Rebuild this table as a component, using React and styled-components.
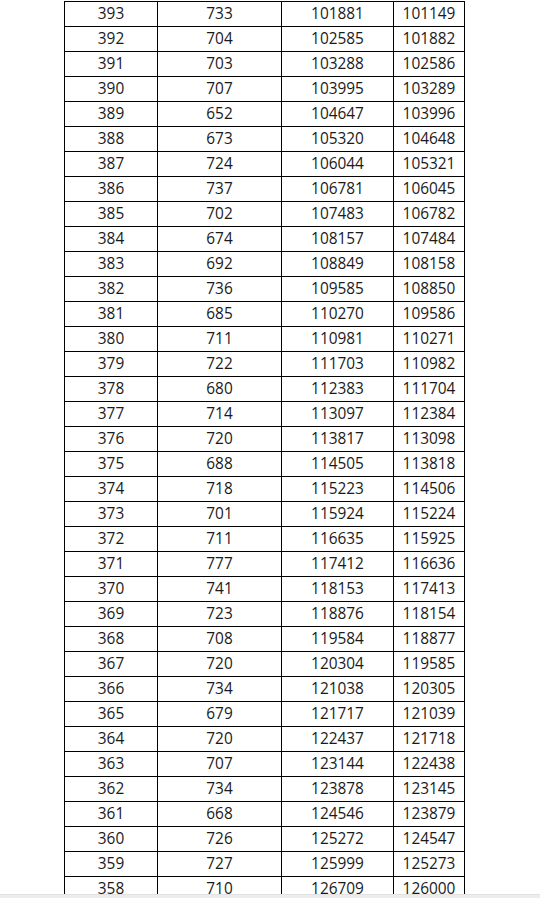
import React from 'react';
import styled, { createGlobalStyle } from 'styled-components';

const GlobalStyle = createGlobalStyle`
  html, body { margin: 0; padding: 0; background: #ffffff; }
  body { font-family: "Open Sans", "Liberation Sans", sans-serif; }
`;

const Page = styled.div`
  width: 540px;
  height: 898px;
  display: flex;
  flex-direction: column;
  overflow: hidden;
  background: #ffffff;
`;

const Viewport = styled.div`
  flex: 1;
  overflow: hidden;
  padding: 1px 0 0 64px;
`;

const Table = styled.table`
  border-collapse: collapse;
  table-layout: fixed;
  width: 400px;
  color: #1a1a1a;
  font-size: 15.4px;
`;

const Col = styled.col`
  width: ${({ $w }) => $w}px;
`;

const Row = styled.tr`
  height: 25px;
`;

const Cell = styled.td`
  border: 1px solid #000000;
  padding: 0;
  text-align: center;
  line-height: 24px;
  white-space: nowrap;
`;

const ScrollStrip = styled.div`
  height: 3px;
  flex-shrink: 0;
  background: #ededed;
  border-top: 1px solid #e2e2e2;
`;

const widths = [93, 124, 112, 71];

const rows = [
  [393, 733, 101881, 101149],
  [392, 704, 102585, 101882],
  [391, 703, 103288, 102586],
  [390, 707, 103995, 103289],
  [389, 652, 104647, 103996],
  [388, 673, 105320, 104648],
  [387, 724, 106044, 105321],
  [386, 737, 106781, 106045],
  [385, 702, 107483, 106782],
  [384, 674, 108157, 107484],
  [383, 692, 108849, 108158],
  [382, 736, 109585, 108850],
  [381, 685, 110270, 109586],
  [380, 711, 110981, 110271],
  [379, 722, 111703, 110982],
  [378, 680, 112383, 111704],
  [377, 714, 113097, 112384],
  [376, 720, 113817, 113098],
  [375, 688, 114505, 113818],
  [374, 718, 115223, 114506],
  [373, 701, 115924, 115224],
  [372, 711, 116635, 115925],
  [371, 777, 117412, 116636],
  [370, 741, 118153, 117413],
  [369, 723, 118876, 118154],
  [368, 708, 119584, 118877],
  [367, 720, 120304, 119585],
  [366, 734, 121038, 120305],
  [365, 679, 121717, 121039],
  [364, 720, 122437, 121718],
  [363, 707, 123144, 122438],
  [362, 734, 123878, 123145],
  [361, 668, 124546, 123879],
  [360, 726, 125272, 124547],
  [359, 727, 125999, 125273],
  [358, 710, 126709, 126000],
];

export default function App() {
  return (
    <Page>
      <GlobalStyle />
      <Viewport>
        <Table>
          <colgroup>
            {widths.map((w, i) => (
              <Col key={i} $w={w} />
            ))}
          </colgroup>
          <tbody>
            {rows.map((r) => (
              <Row key={r[0]}>
                {r.map((v, i) => (
                  <Cell key={i}>{v}</Cell>
                ))}
              </Row>
            ))}
          </tbody>
        </Table>
      </Viewport>
      <ScrollStrip />
    </Page>
  );
}
